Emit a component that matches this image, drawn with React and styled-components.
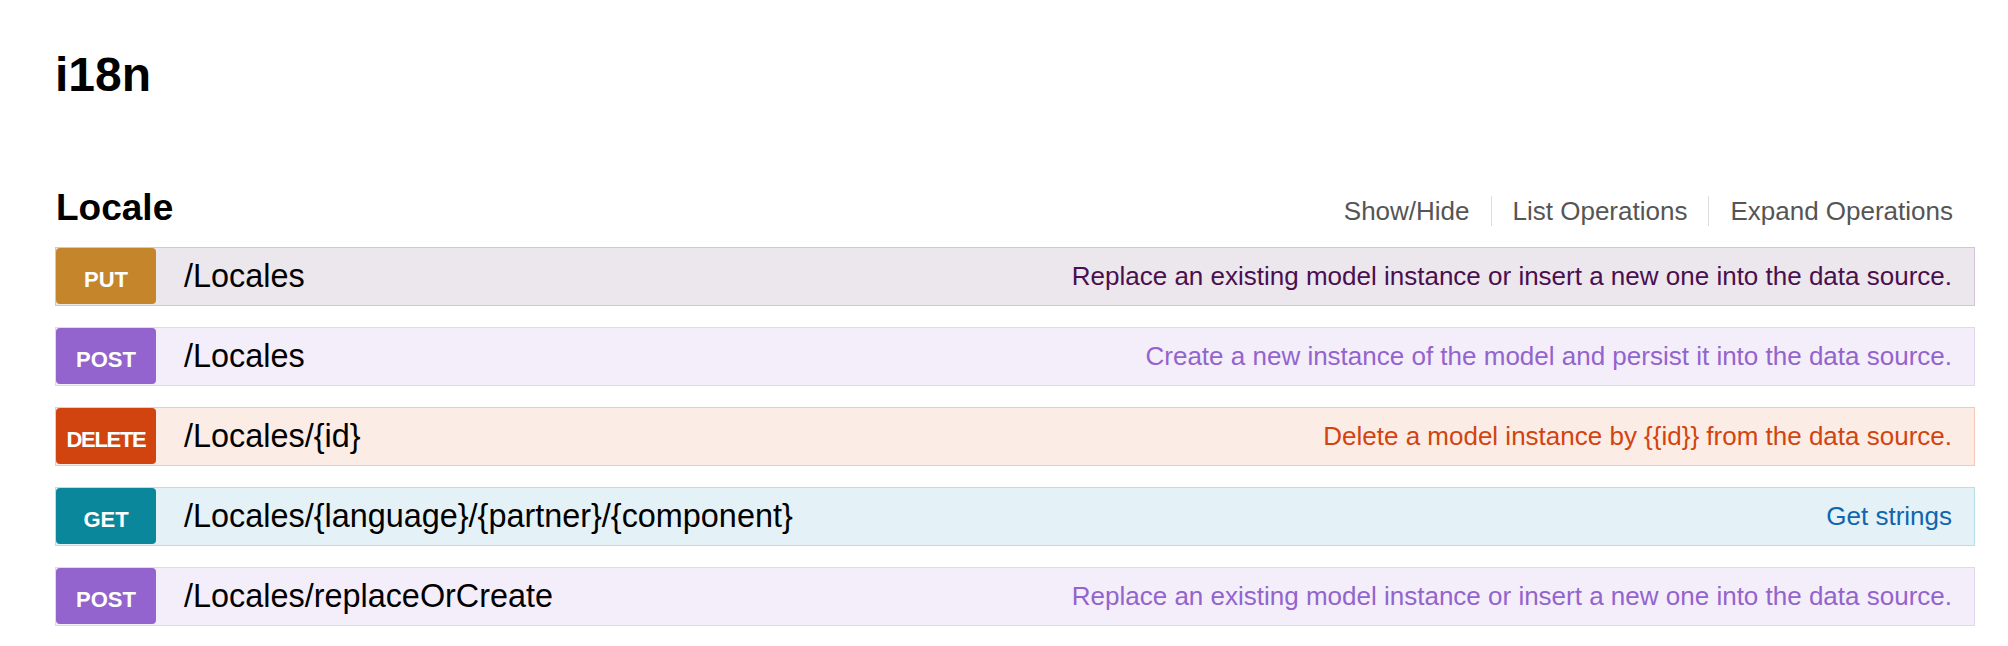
import React from "react";
import styled, { createGlobalStyle } from "styled-components";

const GlobalStyle = createGlobalStyle`
  body {
    margin: 0;
    background: #ffffff;
    font-family: "Liberation Sans", Arial, sans-serif;
    color: #000;
  }
`;

const Page = styled.div`
  padding: 51px 33px 0 55px;
`;

const Title = styled.h1`
  margin: 0;
  font-size: 48px;
  line-height: 1;
  font-weight: bold;
`;

const ResourceHeader = styled.div`
  display: flex;
  align-items: baseline;
  justify-content: space-between;
  margin-top: 90px;
  margin-bottom: 21px;
`;

const ResourceName = styled.h2`
  margin: 0 0 0 1px;
  font-size: 37px;
  line-height: 1;
  font-weight: bold;
`;

const Options = styled.ul`
  display: flex;
  list-style: none;
  margin: 0;
  padding: 0 22px 0 0;
`;

const Option = styled.li`
  font-size: 26px;
  color: #555;
  padding: 0 21px;
  border-left: 1px solid #ddd;
  line-height: 30px;

  &:first-child {
    border-left: 0;
  }

  &:last-child {
    padding-right: 0;
  }
`;

const Operation = styled.div`
  display: flex;
  align-items: center;
  height: 57px;
  margin-bottom: 21px;
  border: 1px solid ${(p) => p.$border};
  background: ${(p) => p.$bg};
`;

const Method = styled.span`
  align-self: flex-start;
  display: flex;
  align-items: center;
  justify-content: center;
  box-sizing: border-box;
  width: 100px;
  height: 56px;
  padding-top: 7px;
  border-radius: 4px;
  background: ${(p) => p.$color};
  color: #fff;
  font-size: 22px;
  font-weight: bold;
  letter-spacing: ${(p) => (p.$tight ? "-1.3px" : "0")};
`;

const Path = styled.span`
  margin-left: 28px;
  font-size: 32.4px;
  color: #000;
`;

const Summary = styled.span`
  margin-left: auto;
  padding-right: 22px;
  font-size: 26px;
  color: ${(p) => p.$color};
`;

const METHODS = {
  PUT: { badge: "#c5862b", bg: "#ece6ed", border: "#d6c2da", text: "#4a0f4f" },
  POST: { badge: "#9364cd", bg: "#f4eefa", border: "#e2d6f1", text: "#9364cd" },
  DELETE: { badge: "#d2440f", bg: "#fbece6", border: "#f4c8b7", text: "#d2440f" },
  GET: { badge: "#0b879c", bg: "#e4f1f6", border: "#b8dfe5", text: "#0f66b0" },
};

const operations = [
  {
    method: "PUT",
    path: "/Locales",
    summary: "Replace an existing model instance or insert a new one into the data source.",
  },
  {
    method: "POST",
    path: "/Locales",
    summary: "Create a new instance of the model and persist it into the data source.",
  },
  {
    method: "DELETE",
    path: "/Locales/{id}",
    summary: "Delete a model instance by {{id}} from the data source.",
  },
  {
    method: "GET",
    path: "/Locales/{language}/{partner}/{component}",
    summary: "Get strings",
  },
  {
    method: "POST",
    path: "/Locales/replaceOrCreate",
    summary: "Replace an existing model instance or insert a new one into the data source.",
  },
];

const App = () => {
  return (
    <Page>
      <GlobalStyle />
      <Title>i18n</Title>
      <ResourceHeader>
        <ResourceName>Locale</ResourceName>
        <Options>
          <Option>Show/Hide</Option>
          <Option>List Operations</Option>
          <Option>Expand Operations</Option>
        </Options>
      </ResourceHeader>
      {operations.map((op, i) => {
        const m = METHODS[op.method];
        return (
          <Operation key={i} $bg={m.bg} $border={m.border}>
            <Method $color={m.badge} $tight={op.method === "DELETE"}>
              {op.method}
            </Method>
            <Path>{op.path}</Path>
            <Summary $color={m.text}>{op.summary}</Summary>
          </Operation>
        );
      })}
    </Page>
  );
};

export default App;
